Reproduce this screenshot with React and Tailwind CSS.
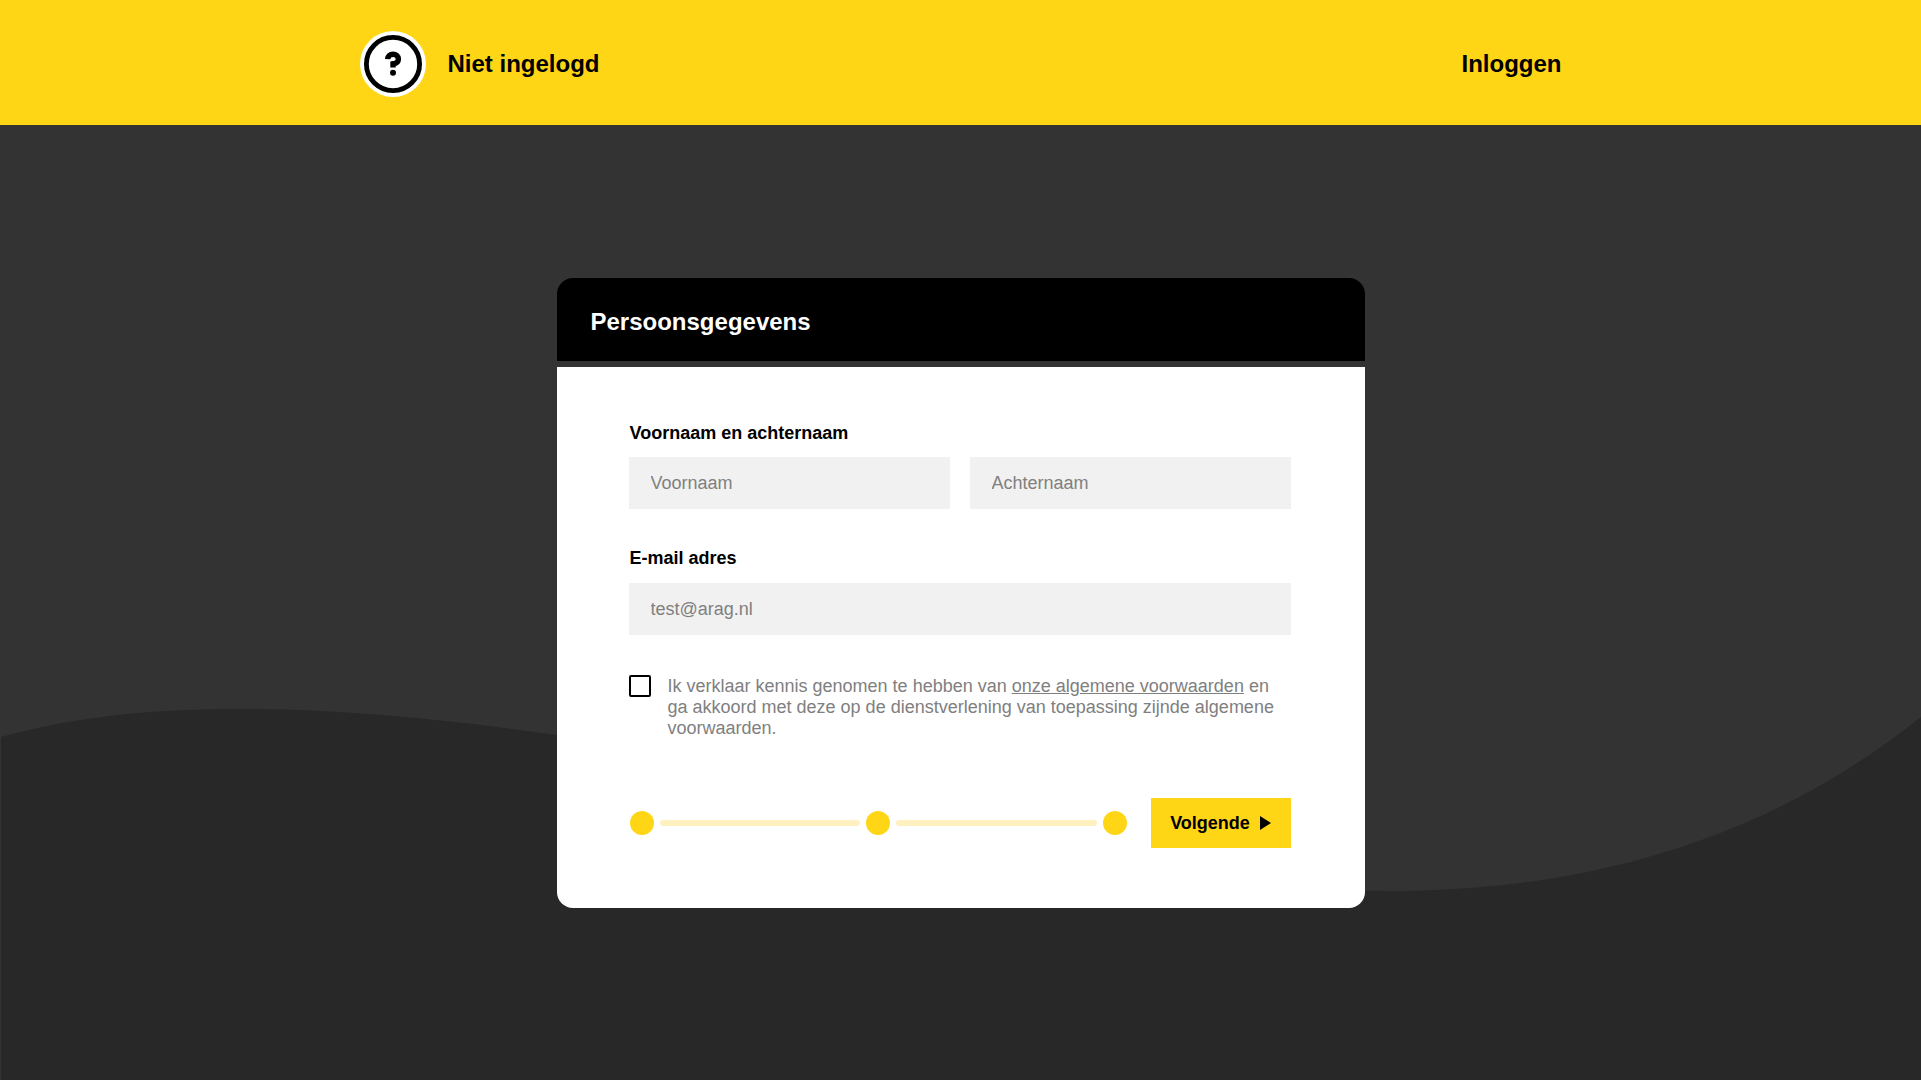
function Backdrop() {
  return (
    <svg
      className="absolute inset-0 -z-10 h-full w-full"
      viewBox="0 0 1921 955"
      preserveAspectRatio="none"
      aria-hidden="true"
    >
      <path
        fill="#282828"
        d="M1 612C81 590 160 584 240 584C345 584 450 595 557 610C840 650 1090 766 1390 766C1590 766 1770 713 1921 592V955H1Z"
      />
    </svg>
  );
}

function GuestIcon() {
  return (
    <svg className="size-[66px] shrink-0" viewBox="0 0 66 66" fill="none" aria-hidden="true">
      <circle cx="33" cy="33" r="33" fill="#fff" />
      <circle cx="33" cy="33" r="26.6" stroke="#000" strokeWidth="4.8" />
      <path
        d="M27.6 28.2C27.8 25 30 23.3 33 23.3C36.2 23.3 38.4 25 38.4 27.9C38.4 30.8 36.4 32.4 33 32.8V36.6"
        stroke="#000"
        strokeWidth="5.4"
      />
      <circle cx="33" cy="41.8" r="3" fill="#000" />
    </svg>
  );
}

const fieldClass =
  "h-13 w-full min-w-0 bg-[#f1f1f1] px-[22px] text-lg text-black placeholder:text-[#808080] placeholder:opacity-100 outline-none focus:ring-2 focus:ring-[#ffd615]";

function Dot() {
  return <span className="size-6 shrink-0 rounded-full bg-[#ffd615]" />;
}

function Bar() {
  return <span className="h-1.5 flex-1 rounded-sm bg-[#fff1bf]" />;
}

export default function App() {
  return (
    <div className="flex min-h-screen flex-col bg-[#333333] font-['Liberation_Sans',Arial,sans-serif] text-black">
      <header className="bg-[#ffd615] pt-[31px] pb-7">
        <div className="mx-auto flex max-w-[1202px] items-center justify-between text-2xl font-bold">
          <div className="flex items-center gap-[22px]">
            <GuestIcon />
            <span>Niet ingelogd</span>
          </div>
          <a href="#inloggen">Inloggen</a>
        </div>
      </header>

      <main className="relative isolate flex-1 px-4 pt-[153px] pb-16">
        <Backdrop />
        <div className="mx-auto flex max-w-[808px] flex-col gap-1.5">
          <div className="rounded-t-2xl bg-black px-[34px] pt-7 pb-[23px]">
            <h1 className="text-2xl font-bold text-white">Persoonsgegevens</h1>
          </div>

          <form
            className="rounded-b-2xl bg-white pt-[52px] pr-[74px] pb-15 pl-[72px]"
            onSubmit={(e) => e.preventDefault()}
          >
            <fieldset>
              <legend className="pl-px text-lg font-bold">Voornaam en achternaam</legend>
              <div className="mt-2.5 flex gap-5">
                <input className={fieldClass} type="text" placeholder="Voornaam" aria-label="Voornaam" />
                <input className={fieldClass} type="text" placeholder="Achternaam" aria-label="Achternaam" />
              </div>
            </fieldset>

            <label className="mt-[35px] block pl-px text-lg font-bold" htmlFor="email">
              E-mail adres
            </label>
            <input id="email" className={`mt-[11px] ${fieldClass}`} type="email" placeholder="test@arag.nl" />

            <div className="mt-10 flex items-start gap-[17px]">
              <input
                id="terms"
                type="checkbox"
                className="size-[22px] shrink-0 appearance-none rounded-xs border-2 border-black bg-white checked:bg-[#ffd615]"
              />
              <label htmlFor="terms" className="pt-px text-lg leading-[21px] text-[#808080]">
                Ik verklaar kennis genomen te hebben van{" "}
                <a href="#voorwaarden" className="underline">
                  onze algemene voorwaarden
                </a>{" "}
                en ga akkoord met deze op de dienstverlening van toepassing zijnde algemene voorwaarden.
              </label>
            </div>

            <div className="mt-[59px] flex items-center gap-6 pl-px">
              <div className="flex flex-1 items-center gap-1.5">
                <Dot />
                <Bar />
                <Dot />
                <Bar />
                <Dot />
              </div>
              <button
                type="submit"
                className="flex h-[50px] min-w-[140px] items-center justify-center gap-2.5 bg-[#ffd615] px-[19px] text-lg font-bold"
              >
                Volgende
                <svg className="h-3.5 w-[11px]" viewBox="0 0 11 14" aria-hidden="true">
                  <path d="M0 0L11 7L0 14Z" fill="#000" />
                </svg>
              </button>
            </div>
          </form>
        </div>
      </main>
    </div>
  );
}
